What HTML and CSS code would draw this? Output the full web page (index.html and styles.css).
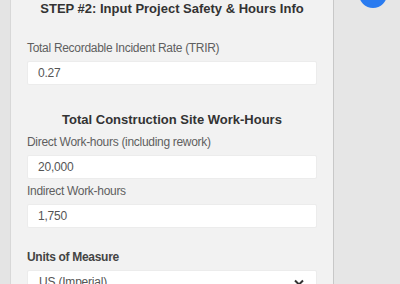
FILE: index.html
```html
<!DOCTYPE html>
<html lang="en">

<head>
    <meta charset="UTF-8">
    <meta name="viewport" content="width=device-width, initial-scale=1.0">
    <title>Safety Calculator</title>
    <link rel="stylesheet" href="styles.css">
</head>

<body>
    <div class="page">
        <div class="side-strip"></div>

        <!-- Step 2 Form Panel -->
        <div class="form-panel">
            <h2>STEP #2: Input Project Safety &amp; Hours Info</h2>

            <div class="field trir-field">
                <label for="trir">Total Recordable Incident Rate (TRIR)</label>
                <input type="text" id="trir" name="trir" value="0.27">
            </div>

            <h3>Total Construction Site Work-Hours</h3>

            <div class="field">
                <label for="direct-hours">Direct Work-hours (including rework)</label>
                <input type="text" id="direct-hours" name="direct-hours" value="20,000">
            </div>

            <div class="field">
                <label for="indirect-hours">Indirect Work-hours</label>
                <input type="text" id="indirect-hours" name="indirect-hours" value="1,750">
            </div>

            <div class="field units-field">
                <label for="units" class="strong">Units of Measure</label>
                <div class="select-wrap">
                    <select id="units" name="units">
                        <option value="us">US (Imperial)</option>
                        <option value="metric">Metric</option>
                    </select>
                    <svg class="chevron" width="10" height="7" viewBox="0 0 10 7">
                        <path d="M1 1.5 L5 5.5 L9 1.5" fill="none" stroke="#333" stroke-width="2"/>
                    </svg>
                </div>
            </div>
        </div>

        <div class="right-area">
            <div class="fab"></div>
        </div>
    </div>
</body>
</html>
```

FILE: styles.css
```css
/* General Styling */
body {
    font-family: "Liberation Sans", Arial, sans-serif;
    background-color: #e6e6e6;
    margin: 0;
    padding: 0;
    overflow: hidden;
}

.page {
    display: flex;
    height: 284px;
}

.side-strip {
    width: 10px;
    background-color: #e4e4e4;
    border-right: 1px solid #d8d8d8;
}

.form-panel {
    width: 290px;
    padding: 0 16px 0 16px;
    background-color: #f2f2f2;
    border-right: 1px solid #c8c8c8;
}

h2 {
    margin: 0;
    font-size: 13px;
    line-height: 18px;
    text-align: center;
    color: #333;
}

h3 {
    margin: 26px 0 5px;
    font-size: 13px;
    line-height: 18px;
    text-align: center;
    color: #333;
}

.field {
    margin-bottom: 4px;
}

.trir-field {
    margin-top: 22px;
}

label {
    display: block;
    font-size: 12px;
    letter-spacing: -0.3px;
    line-height: 16px;
    color: #5f5f5f;
    margin-bottom: 5px;
}

label.strong {
    font-weight: bold;
    color: #444;
    margin-bottom: 5px;
}

input[type="text"],
select {
    display: block;
    width: 100%;
    height: 24px;
    padding: 0 10px;
    margin: 0;
    font-family: "Liberation Sans", Arial, sans-serif;
    font-size: 12px;
    letter-spacing: -0.2px;
    color: #555;
    background-color: #fff;
    border: 1px solid #ececec;
    border-radius: 2px;
    box-sizing: border-box;
}

.units-field {
    margin-top: 21px;
}

.select-wrap {
    position: relative;
}

select {
    appearance: none;
    padding-left: 11px;
}

.chevron {
    position: absolute;
    right: 13px;
    top: 9px;
}

/* Right side */
.right-area {
    flex: 1;
    position: relative;
}

.fab {
    position: absolute;
    left: 25px;
    top: -20px;
    width: 28px;
    height: 28px;
    border-radius: 50%;
    background-color: #2a7bf0;
}
```
